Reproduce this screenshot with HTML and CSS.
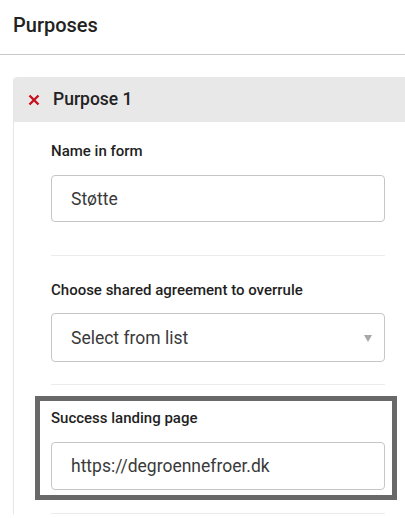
FILE: index.html
```html
<!doctype html>
<html>
<head>
<meta charset="UTF-8">
<title>Purposes</title>
<link rel="stylesheet" href="styles.css">
</head>
<body>
<div class="page">
	<div class="page-head">
		<h1>Purposes</h1>
	</div>

	<div class="purpose-card">
		<div class="purpose-head">
			<svg class="remove" width="12" height="12" viewBox="0 0 12 12">
				<path d="M1.5 1.5 L10.5 10.5 M10.5 1.5 L1.5 10.5" stroke="#c8101c" stroke-width="2.4" fill="none"/>
			</svg>
			<span>Purpose 1</span>
		</div>

		<div class="purpose-body">
			<div class="field field-first">
				<label>Name in form</label>
				<input class="text-input h47" type="text" value="Støtte">
			</div>
			<div class="rule"></div>

			<div class="field field-second">
				<label>Choose shared agreement to overrule</label>
				<div class="select-wrap">
					<select class="text-input h49">
						<option>Select from list</option>
					</select>
					<span class="arrow"></span>
				</div>
			</div>
			<div class="rule"></div>

			<div class="field field-focus">
				<label>Success landing page</label>
				<input class="text-input h48" type="text" value="https://degroennefroer.dk">
			</div>
			<div class="rule"></div>
		</div>
	</div>
</div>
</body>
</html>
```

FILE: styles.css
```css
html, body {
	margin: 0;
	padding: 0;
	background: #fff;
	overflow: hidden;
}

.page {
	font-family: Roboto, "Liberation Sans", sans-serif;
	color: #222;
}

.page-head {
	height: 54px;
	border-bottom: 1px solid #c8c8c8;
	display: flex;
	align-items: center;
	padding: 0 13px;
}

.page-head h1 {
	margin: 0;
	font-size: 20px;
	font-weight: 500;
	margin-top: -4px;
}

/* card runs on past the right edge, so no right border */
.purpose-card {
	margin: 22px 0 0 13px;
	border-left: 1px solid #e6e6e6;
	border-top-left-radius: 4px;
}

.purpose-head {
	height: 45px;
	background: #e8e8e8;
	border-top-left-radius: 4px;
	display: flex;
	align-items: center;
	gap: 13px;
	padding-left: 14px;
	font-size: 17.5px;
	font-weight: 500;
}

.purpose-head span {
	margin-top: -2px;
}

.purpose-body {
	padding: 0 0 0 37px;
}

.field {
	display: flex;
	flex-direction: column;
	width: 334px;
}

.field label {
	font-size: 15px;
	font-weight: 500;
	line-height: 20px;
	margin-bottom: 14px;
	color: #1f1f1f;
}

.field-first {
	padding-top: 19px;
	padding-bottom: 33px;
}

.field-second {
	padding-top: 24px;
	padding-bottom: 22px;
}

.field-second label {
	margin-bottom: 13px;
}

/* highlighted field */
.field-focus {
	margin: 11px 0 13px -16px;
	border: 5px solid #696969;
	padding: 7px 7px 5px 11px;
}

.text-input {
	box-sizing: border-box;
	width: 100%;
	border: 1px solid #c6c6c6;
	border-radius: 4px;
	padding: 0 19px;
	font-family: Roboto, "Liberation Sans", sans-serif;
	font-size: 17.5px;
	color: #3a3a3a;
	background: #fff;
	outline: none;
}

.h47 { height: 47px; }
.h48 { height: 48px; }
.h49 { height: 49px; }

.select-wrap {
	position: relative;
}

.select-wrap select {
	-webkit-appearance: none;
	appearance: none;
	display: block;
}

.select-wrap .arrow {
	position: absolute;
	right: 13px;
	top: 22px;
	width: 0;
	height: 0;
	border-left: 4px solid transparent;
	border-right: 4px solid transparent;
	border-top: 7px solid #a8a8a8;
}

.rule {
	width: 334px;
	height: 1px;
	background: #ececec;
}
```
